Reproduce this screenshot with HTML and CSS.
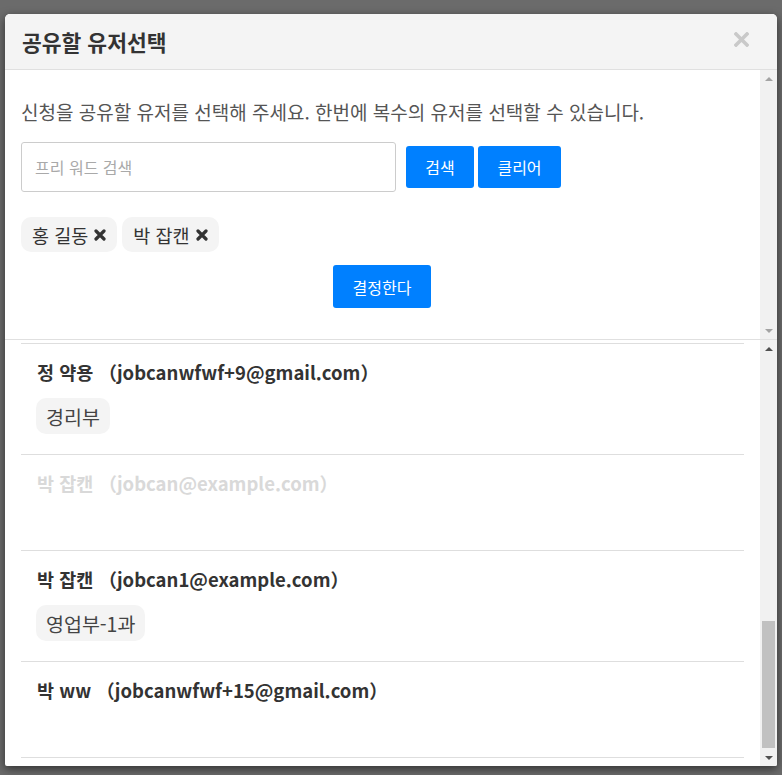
FILE: index.html
```html
<!DOCTYPE html>
<html lang="ko">
<head>
<meta charset="utf-8">
<title>공유할 유저선택</title>
<link rel="stylesheet" href="styles.css">
</head>
<body>
<div class="modal">
  <div class="modal-header">
    <h1 class="modal-title">공유할 유저선택</h1>
    <button class="close" aria-label="close">
      <svg width="15" height="15" viewBox="0 0 15 15"><path d="M2 2 L13 13 M13 2 L2 13" stroke="#c9c9c9" stroke-width="3.6" stroke-linecap="square"/></svg>
    </button>
  </div>
  <div class="pane pane-top">
    <div class="pane-content top-content">
      <p class="desc">신청을 공유할 유저를 선택해 주세요. 한번에 복수의 유저를 선택할 수 있습니다.</p>
      <div class="search-row">
        <input class="search-input" type="text" placeholder="프리 워드 검색">
        <button class="btn btn-search">검색</button>
        <button class="btn btn-clear">클리어</button>
      </div>
      <div class="chips">
        <span class="chip">홍 길동 <svg class="x" width="12" height="12" viewBox="0 0 12 12"><path d="M2 2 L10 10 M10 2 L2 10" stroke="#333" stroke-width="3.2" stroke-linecap="round"/></svg></span>
        <span class="chip">박 잡캔 <svg class="x" width="12" height="12" viewBox="0 0 12 12"><path d="M2 2 L10 10 M10 2 L2 10" stroke="#333" stroke-width="3.2" stroke-linecap="round"/></svg></span>
      </div>
      <div class="decide-row">
        <button class="btn btn-decide">결정한다</button>
      </div>
    </div>
    <div class="scrollbar">
      <span class="arrow up light"></span>
      <span class="track-space"></span>
      <span class="arrow down light"></span>
    </div>
  </div>
  <div class="pane pane-bottom">
    <div class="pane-content list">
      <div class="item">
        <div class="name">정 약용 （jobcanwfwf+9@gmail.com）</div>
        <div class="tags"><span class="tag">경리부</span></div>
      </div>
      <div class="item disabled">
        <div class="name">박 잡캔 （jobcan@example.com）</div>
        <div class="tags"></div>
      </div>
      <div class="item">
        <div class="name">박 잡캔 （jobcan1@example.com）</div>
        <div class="tags"><span class="tag">영업부-1과</span></div>
      </div>
      <div class="item">
        <div class="name">박 ww （jobcanwfwf+15@gmail.com）</div>
        <div class="tags"></div>
      </div>
      <div class="item"></div>
    </div>
    <div class="scrollbar">
      <span class="arrow up"></span>
      <span class="track-space bottom-track"><span class="thumb"></span></span>
      <span class="arrow down"></span>
    </div>
  </div>
</div>
</body>
</html>
```

FILE: styles.css
```css
* { box-sizing: border-box; }
html, body { margin: 0; height: 775px; overflow: hidden; }
body {
  background: #6b6b6b;
  padding: 14px 5px 0 5px;
  font-family: "Noto Sans CJK KR", "Noto Sans", sans-serif;
  color: #333;
}
.modal {
  width: 772px;
  height: 752px;
  background: #fff;
  border-radius: 5px 5px 2px 2px;
  box-shadow: 0 3px 10px rgba(0,0,0,0.55);
  display: flex;
  flex-direction: column;
  overflow: hidden;
}
.modal-header {
  height: 56px;
  flex: none;
  background: #f4f4f4;
  border-bottom: 1px solid #e0e0e0;
  display: flex;
  align-items: center;
  justify-content: space-between;
  padding: 0 28px 0 17px;
}
.modal-title {
  margin: 0;
  font-size: 21.5px;
  line-height: 28px;
  font-weight: 700;
  color: #333;
}
.close {
  border: 0;
  background: none;
  padding: 0;
  display: flex;
  margin-top: -4px;
}
.pane {
  display: flex;
  flex: none;
}
.pane-top {
  height: 270px;
  border-bottom: 1px solid #e0e0e0;
}
.pane-bottom {
  flex: 1;
  min-height: 0;
}
.pane-content {
  flex: 1;
  padding: 0 16px;
  overflow: hidden;
}
.scrollbar {
  width: 17px;
  flex: none;
  background: #f1f1f1;
  display: flex;
  flex-direction: column;
  align-items: center;
}
.arrow {
  height: 17px;
  width: 17px;
  flex: none;
  display: flex;
  align-items: center;
  justify-content: center;
}
.arrow::before {
  content: "";
  border-left: 4px solid transparent;
  border-right: 4px solid transparent;
}
.arrow.up::before { border-bottom: 4px solid #505050; }
.arrow.down::before { border-top: 4px solid #505050; }
.arrow.light.up::before { border-bottom-color: #a3a3a3; }
.arrow.light.down::before { border-top-color: #a3a3a3; }
.track-space {
  flex: 1;
  width: 100%;
  display: flex;
  flex-direction: column;
  justify-content: flex-end;
  align-items: center;
}
.thumb {
  width: 13px;
  height: 127px;
  background: #c1c1c1;
  margin-bottom: 1px;
}
.top-content {
  padding-top: 30px;
}
.desc {
  margin: 0;
  font-size: 19px;
  line-height: 24px;
  color: #555;
}
.search-row {
  display: flex;
  align-items: center;
  margin-top: 18px;
}
.search-input {
  width: 375px;
  height: 50px;
  border: 1px solid #ccc;
  border-radius: 3px;
  padding: 0 13px;
  font-family: inherit;
  font-size: 16px;
  color: #333;
  margin-right: 10px;
}
.search-input::placeholder { color: #a9a9a9; }
.btn {
  border: 0;
  border-radius: 3px;
  background: #0080ff;
  color: #fff;
  font-family: inherit;
  font-size: 16px;
  height: 42px;
  padding: 0;
}
.btn-search { width: 68px; margin-right: 4px; }
.btn-clear { width: 83px; }
.chips {
  display: flex;
  gap: 5px;
  margin-top: 25px;
}
.chip {
  height: 35px;
  background: #f4f4f4;
  border-radius: 10px;
  padding: 0 11px 0 11px;
  font-size: 18.5px;
  color: #333;
  display: flex;
  align-items: center;
  gap: 6px;
}
.chip .x { margin-top: 1px; }
.decide-row {
  display: flex;
  justify-content: center;
  margin-top: 13px;
  padding-right: 1px;
}
.btn-decide { width: 98px; height: 43px; }
.list { padding-top: 3px; }
.item {
  border-top: 1px solid #dedede;
  padding: 16px 16px 20px 16px;
}
.name {
  font-size: 18.5px;
  font-weight: 700;
  line-height: 24px;
  color: #333;
}
.item.disabled .name { color: #d9d9d9; }
.tags {
  margin-top: 14px;
  min-height: 21px;
  display: flex;
}
.tag {
  height: 36px;
  background: #f4f4f4;
  border-radius: 10px;
  padding: 0 10px;
  margin-left: -1px;
  font-size: 19.5px;
  color: #444;
  display: flex;
  align-items: center;
}
```
